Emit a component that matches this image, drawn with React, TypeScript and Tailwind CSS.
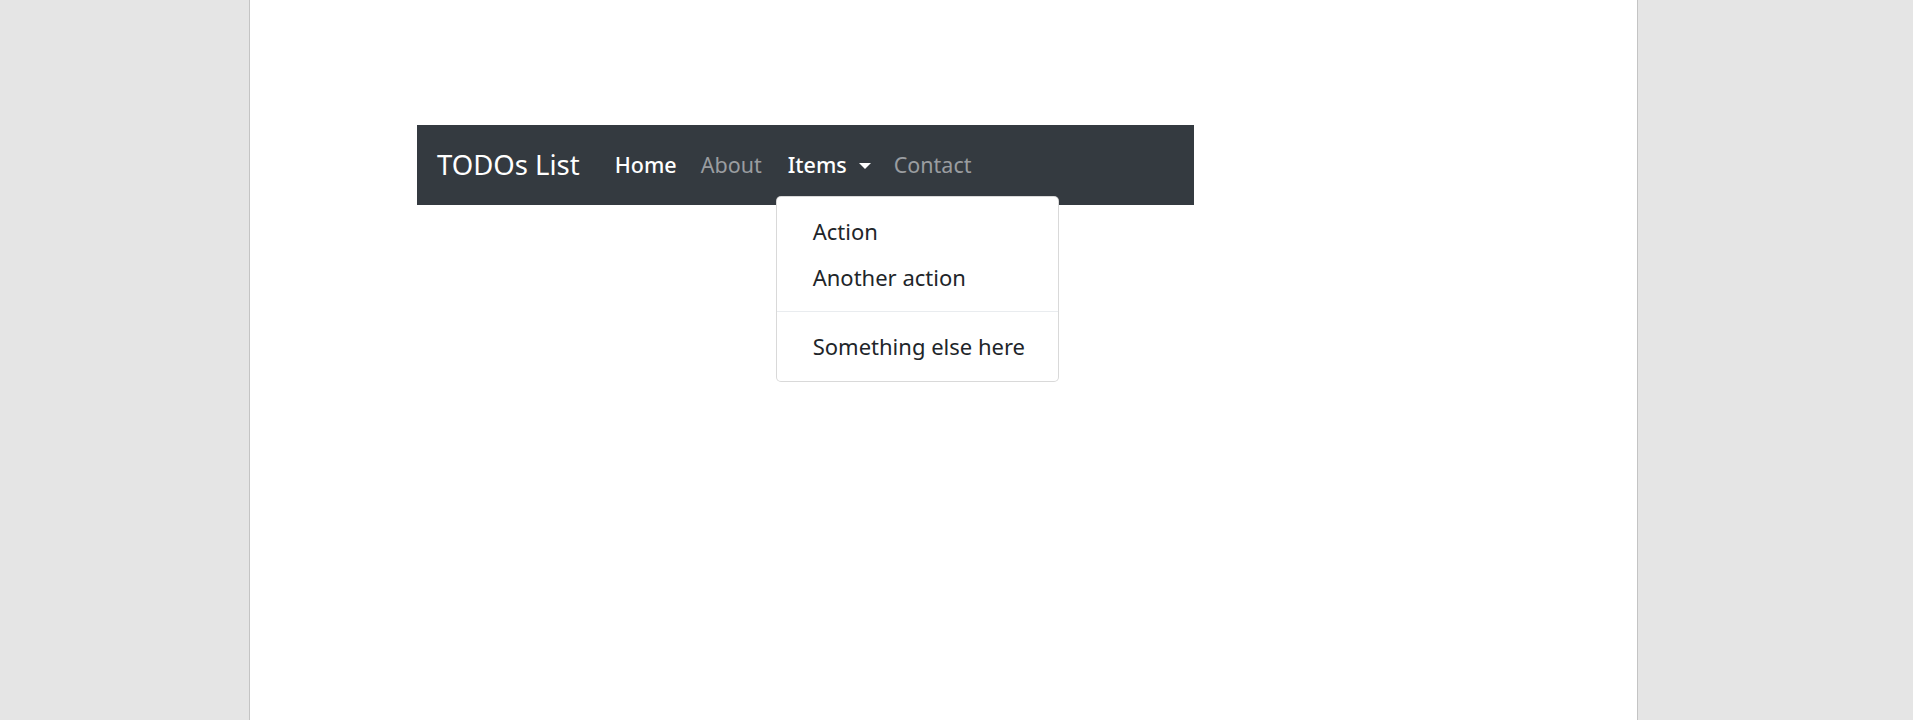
import React from "react";

const font = { fontFamily: '"Noto Sans", "Open Sans", Arial, sans-serif' };

export default function App() {
  return (
    <div className="flex h-[720px] w-full bg-[#e5e5e5]" style={font}>
      <div className="w-[249px] shrink-0" />
      <div className="relative w-[1389px] shrink-0 border-x border-[#c4c4c4] bg-white">
        <div className="pl-[167px] pt-[125px]">
          <nav className="flex h-[80px] w-[777px] items-center bg-[#343a40] pl-[20px]">
            <span className="mr-[35px] whitespace-nowrap text-[27.5px] leading-none text-white">TODOs List</span>
            <div className="flex items-center whitespace-nowrap text-[21.5px] leading-none">
              <a className="w-[86px] font-medium text-white">Home</a>
              <a className="w-[87px] text-[#9a9da0]">About</a>
              <div className="relative w-[106px]">
                <a className="flex items-center font-medium text-white">
                  Items
                  <span className="ml-[12px] mt-[1px] h-0 w-0 border-x-[6.5px] border-t-[6px] border-x-transparent border-t-white" />
                </a>
                <div className="absolute left-[-12px] top-[42px] z-10 w-[283px] rounded-[5px] border border-[rgba(0,0,0,0.15)] bg-white pb-[12px] pt-[11px] text-[22px] font-normal text-[#212529]">
                  <div className="flex h-[46px] items-center px-[36px]">Action</div>
                  <div className="flex h-[46px] items-center px-[36px]">Another action</div>
                  <div className="mb-[11px] mt-[11px] h-px bg-[#e9ecef]" />
                  <div className="flex h-[46px] items-center px-[36px]">Something else here</div>
                </div>
              </div>
              <a className="text-[#9a9da0]">Contact</a>
            </div>
          </nav>
        </div>
      </div>
      <div className="flex-1" />
    </div>
  );
}
